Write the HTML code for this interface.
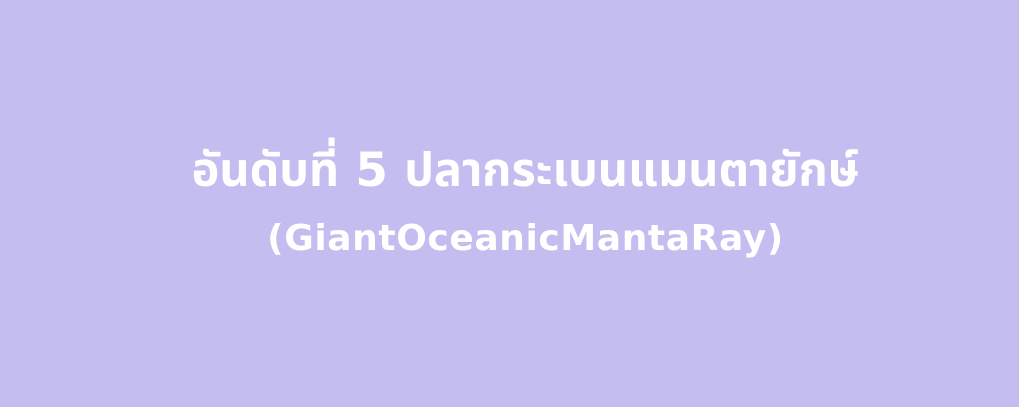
<!DOCTYPE html>
<html><head><meta charset="utf-8"><style>
html,body{margin:0;padding:0;}
body{width:1019px;height:407px;background:#c4bdf0;overflow:hidden;position:relative;font-family:"DejaVu Sans","Liberation Sans","Noto Sans Thai","Loma","Garuda",sans-serif;font-weight:bold;color:#fff;}
.l{position:absolute;left:16px;width:1019px;text-align:center;white-space:nowrap;}
#a{top:141px;font-size:46.8px;line-height:60px;}
#b{top:214px;font-size:36px;line-height:50px;letter-spacing:0.6px;}
</style></head><body>
<div class="l" id="a">อันดับที่ 5 ปลากระเบนแมนตายักษ์</div>
<div class="l" id="b">(GiantOceanicMantaRay)</div>
</body></html>
